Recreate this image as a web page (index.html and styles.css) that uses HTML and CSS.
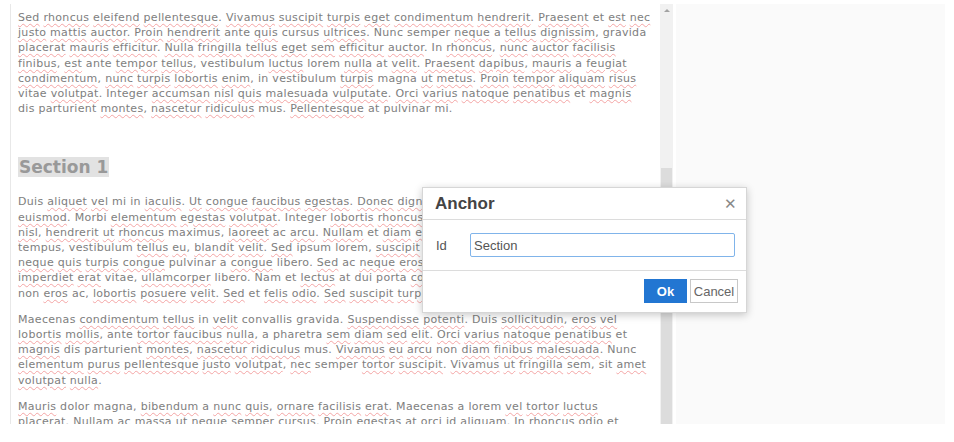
FILE: index.html
```html
<!DOCTYPE html>
<html lang="en">
<head>
	<meta charset="UTF-8">
	<title>Anchor</title>
	<link rel="stylesheet" href="styles.css">
</head>
<body>
	<div class="app">
		<!-- editor -->
		<div class="editor">
			<p><u>Sed</u> <u>rhoncus</u> <u>eleifend</u> <u>pellentesque</u>. <u>Vivamus</u> <u>suscipit</u> <u>turpis</u> <u>eget</u> <u>condimentum</u> <u>hendrerit</u>. <u>Praesent</u> et <u>est</u> <u>nec</u><br>
			<u>justo</u> <u>mattis</u> <u>auctor</u>. <u>Proin</u> <u>hendrerit</u> ante <u>quis</u> cursus <u>ultrices</u>. Nunc semper <u>neque</u> a <u>tellus</u> <u>dignissim</u>, gravida<br>
			<u>placerat</u> <u>mauris</u> <u>efficitur</u>. <u>Nulla</u> <u>fringilla</u> <u>tellus</u> <u>eget</u> <u>sem</u> <u>efficitur</u> <u>auctor</u>. In <u>rhoncus</u>, <u>nunc</u> <u>auctor</u> <u>facilisis</u><br>
			<u>finibus</u>, <u>est</u> ante <u>tempor</u> <u>tellus</u>, vestibulum <u>luctus</u> lorem <u>nulla</u> at <u>velit</u>. <u>Praesent</u> <u>dapibus</u>, <u>mauris</u> a <u>feugiat</u><br>
			<u>condimentum</u>, <u>nunc</u> <u>turpis</u> <u>lobortis</u> <u>enim</u>, in vestibulum <u>turpis</u> magna <u>ut</u> <u>metus</u>. <u>Proin</u> <u>tempor</u> <u>aliquam</u> <u>risus</u><br>
			vitae <u>volutpat</u>. Integer <u>accumsan</u> <u>nisl</u> <u>quis</u> <u>malesuada</u> <u>vulputate</u>. <u>Orci</u> <u>varius</u> <u>natoque</u> <u>penatibus</u> et <u>magnis</u><br>
			dis parturient <u>montes</u>, <u>nascetur</u> <u>ridiculus</u> mus. <u>Pellentesque</u> at pulvinar mi.</p>

			<h2><span>Section 1</span></h2>

			<p>Duis <u>aliquet</u> <u>vel</u> mi in <u>iaculis</u>. <u>Ut</u> <u>congue</u> <u>faucibus</u> <u>egestas</u>. <u>Donec</u> <u>dignissim</u> <u>lacus</u> sed <u>nunc</u><br>
			<u>euismod</u>. Morbi <u>elementum</u> <u>egestas</u> <u>volutpat</u>. Integer <u>lobortis</u> <u>rhoncus</u> <u>est</u>, non <u>dictum</u><br>
			<u>nisl</u>, <u>hendrerit</u> <u>ut</u> <u>rhoncus</u> maximus, <u>laoreet</u> ac <u>arcu</u>. <u>Nullam</u> et <u>diam</u> <u>eget</u> <u>nunc</u><br>
			tempus, vestibulum <u>tellus</u> <u>eu</u>, <u>blandit</u> <u>velit</u>. <u>Sed</u> ipsum lorem, <u>suscipit</u> at <u>mattis</u><br>
			<u>neque</u> <u>quis</u> <u>turpis</u> <u>congue</u> pulvinar a <u>congue</u> libero. <u>Sed</u> ac <u>neque</u> <u>eros</u>. <u>Aenean</u><br>
			<u>imperdiet</u> <u>erat</u> vitae, <u>ullamcorper</u> libero. Nam et <u>lectus</u> at dui porta <u>consequat</u><br>
			non <u>eros</u> ac, <u>lobortis</u> <u>posuere</u> <u>velit</u>. <u>Sed</u> et <u>felis</u> <u>odio</u>. <u>Sed</u> <u>suscipit</u> <u>turpis</u> nec.</p>

			<p>Maecenas <u>condimentum</u> <u>tellus</u> in <u>velit</u> convallis gravida. <u>Suspendisse</u> <u>potenti</u>. Duis <u>sollicitudin</u>, <u>eros</u> <u>vel</u><br>
			<u>lobortis</u> <u>mollis</u>, ante <u>tortor</u> <u>faucibus</u> <u>nulla</u>, a pharetra <u>sem</u> <u>diam</u> <u>sed</u> <u>elit</u>. <u>Orci</u> <u>varius</u> <u>natoque</u> <u>penatibus</u> et<br>
			<u>magnis</u> dis parturient <u>montes</u>, <u>nascetur</u> <u>ridiculus</u> mus. <u>Vivamus</u> <u>eu</u> <u>arcu</u> non <u>diam</u> <u>finibus</u> <u>malesuada</u>. Nunc<br>
			<u>elementum</u> <u>purus</u> <u>pellentesque</u> <u>justo</u> <u>volutpat</u>, <u>nec</u> semper <u>tortor</u> <u>suscipit</u>. <u>Vivamus</u> <u>ut</u> <u>fringilla</u> <u>sem</u>, sit <u>amet</u><br>
			<u>volutpat</u> <u>nulla</u>.</p>

			<p><u>Mauris</u> dolor magna, <u>bibendum</u> a <u>nunc</u> <u>quis</u>, <u>ornare</u> <u>facilisis</u> <u>erat</u>. Maecenas a lorem <u>vel</u> <u>tortor</u> <u>luctus</u><br>
			<u>placerat</u>. <u>Nullam</u> ac <u>massa</u> <u>ut</u> <u>neque</u> semper cursus. <u>Proin</u> <u>egestas</u> at <u>orci</u> id <u>aliquam</u>. In <u>rhoncus</u> <u>odio</u> et</p>
		</div>

		<!-- scrollbar -->
		<div class="scroll">
			<div class="scroll_up"></div>
			<div class="scroll_thumb"></div>
		</div>

		<!-- side panel -->
		<div class="side"></div>
	</div>

	<!-- anchor dialog -->
	<div class="dialog">
		<div class="dialog_head">
			<span class="dialog_title">Anchor</span>
			<span class="dialog_close">&#x2715;</span>
		</div>
		<div class="dialog_body">
			<label for="anchor_id">Id</label>
			<input type="text" id="anchor_id" value="Section">
		</div>
		<div class="dialog_foot">
			<button class="btn btn_ok">Ok</button>
			<button class="btn btn_cancel">Cancel</button>
		</div>
	</div>
</body>
</html>
```

FILE: styles.css
```css
body{
	margin:0;
	background:#fff;
	font-family:"DejaVu Sans",Verdana,sans-serif;
}
.app{
	display:flex;
	width:935px;
	height:420px;
	margin:4px 0 0 10px;
}
.editor{
	width:642px;
	border-left:1px solid #e8e8e8;
	padding:6px 0 0 7px;
	overflow:hidden;
	font-size:11px;
	letter-spacing:0.3px;
	line-height:15.2px;
	color:#7e7e7e;
}
.editor p{
	margin:0 0 11px;
	white-space:nowrap;
}
.editor u{
	text-decoration:underline wavy #f4a5a5;
	text-decoration-thickness:1px;
	text-underline-offset:2px;
}
.editor h2{
	margin:40px 0 15px;
	font-size:17px;
	letter-spacing:0;
	line-height:23px;
	color:#999;
}
.editor h2 span{
	background:#e2e2e2;
	padding:0 1px;
}
.scroll{
	width:13px;
	background:#f1f1f1;
	display:flex;
	flex-direction:column;
}
.scroll_up{
	height:12px;
	display:flex;
	align-items:center;
	justify-content:center;
}
.scroll_up::before{
	content:"";
	border-left:3px solid transparent;
	border-right:3px solid transparent;
	border-bottom:3px solid #a3a3a3;
}
.scroll_thumb{
	flex:1;
	margin:152px 1px 0;
	background:#dcdcdc;
}
.side{
	width:269px;
	margin-left:3px;
	background:#fafafa;
}
.dialog{
	position:absolute;
	left:422px;
	top:187px;
	width:323px;
	background:#fff;
	border:1px solid #d6d6d6;
	box-shadow:0 2px 8px rgba(0,0,0,.22);
	font-family:"Liberation Sans",Arial,sans-serif;
	color:#555;
}
.dialog_head{
	display:flex;
	align-items:center;
	justify-content:space-between;
	height:31px;
	padding:0 9px 0 12px;
	border-bottom:1px solid #dcdcdc;
}
.dialog_title{
	font-size:17px;
	font-weight:bold;
	color:#444;
}
.dialog_close{
	font-size:15px;
	color:#888;
}
.dialog_body{
	display:flex;
	align-items:center;
	height:50px;
	padding:0 11px 0 13px;
	border-bottom:1px solid #dcdcdc;
	font-size:13px;
}
.dialog_body label{
	width:34px;
}
.dialog_body input{
	flex:1;
	height:24px;
	box-sizing:border-box;
	border:1px solid #80b4ea;
	border-radius:2px;
	padding:0 3px;
	font-family:inherit;
	font-size:13px;
	color:#555;
	outline:none;
}
.dialog_foot{
	display:flex;
	justify-content:flex-end;
	gap:3px;
	padding:8px 8px 9px;
}
.btn{
	height:24px;
	font-family:inherit;
	padding:0;
	border-radius:0;
}
.btn_ok{
	width:43px;
	border:1px solid #2276d2;
	background:#2276d2;
	color:#fff;
	font-size:13px;
	font-weight:bold;
}
.btn_cancel{
	width:48px;
	border:1px solid #c8c8c8;
	background:#fff;
	color:#666;
	font-size:13px;
}
```
